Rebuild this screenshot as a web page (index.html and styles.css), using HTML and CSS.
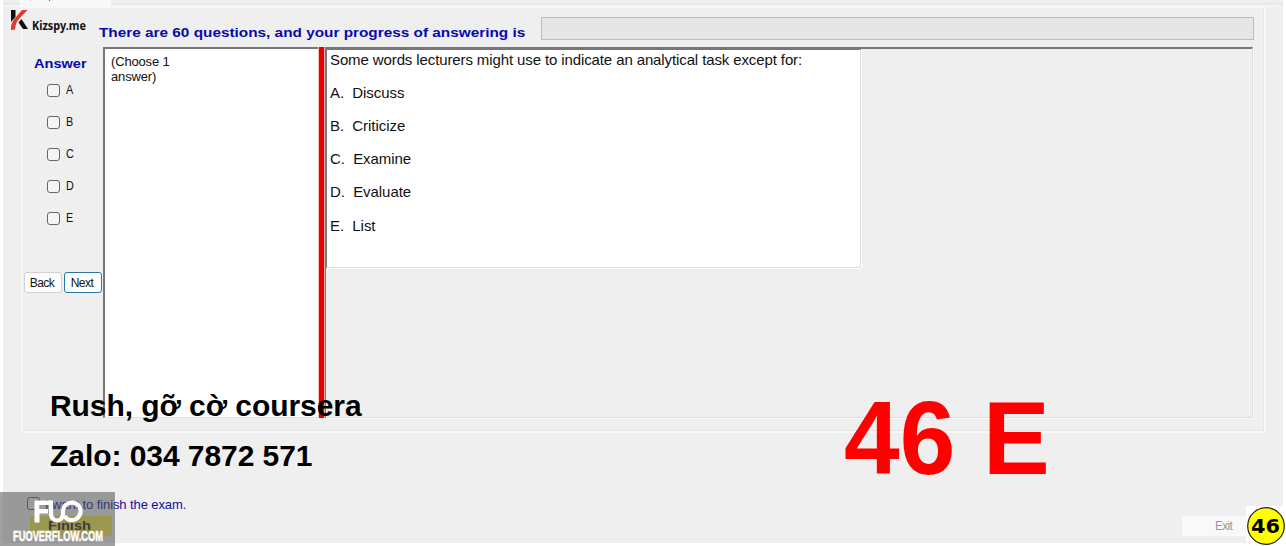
FILE: index.html
```
<!DOCTYPE html>
<html lang="en">
<head>
<meta charset="utf-8">
<title>Exam</title>
<link rel="stylesheet" href="styles.css">
</head>
<body>
<main class="window">
  <div class="tabs"><div class="tab"><span class="tab-tail"></span></div></div>
  <section class="group">
    <header class="top">
      <h1 class="progress-label"><span>There are 60 questions, and your progress of answering is</span></h1>
      <div class="progress"></div>
    </header>
    <div class="content">
      <aside class="answers">
        <h2><span>Answer</span></h2>
        <label class="choice"><i class="box"></i><span>A</span></label>
        <label class="choice"><i class="box"></i><span>B</span></label>
        <label class="choice"><i class="box"></i><span>C</span></label>
        <label class="choice"><i class="box"></i><span>D</span></label>
        <label class="choice"><i class="box"></i><span>E</span></label>
        <div class="nav"><button class="btn">Back</button><button class="btn focused">Next</button></div>
      </aside>
      <div class="hint">(Choose 1<br>answer)</div>
      <div class="splitter"></div>
      <div class="viewer">
        <article class="question">
          <p class="stem">Some words lecturers might use to indicate an analytical task except for:</p>
          <p>A.&nbsp; Discuss</p>
          <p>B.&nbsp; Criticize</p>
          <p>C.&nbsp; Examine</p>
          <p class="wide">D.&nbsp; Evaluate</p>
          <p>E.&nbsp; List</p>
        </article>
      </div>
    </div>
  </section>
  <footer class="footer">
    <div class="finish">
      <label class="confirm"><i class="box"></i><span>I want to finish the exam.</span></label>
      <div class="finish-btn"><span>Finish</span></div>
    </div>
    <div class="exit"><span>Exit</span></div>
  </footer>
</main>

<svg class="kizspy" width="92" height="28" viewBox="0 0 92 28">
  <path d="M2 1h4.500v7L2 13z" fill="#111"/>
  <path d="M13 1h5.500L9.500 10.500Q6.500 14 6 20.500L2 21v-3.500Q3 12 7 8z" fill="#e23a30"/>
  <path d="M9.500 13.500l3-3.500 6.500 10h-5z" fill="#111"/>
  <text x="23" y="21" textLength="54" lengthAdjust="spacingAndGlyphs">Kizspy.me</text>
</svg>
<div class="note note-a">Rush, gỡ cờ coursera</div>
<div class="note note-b">Zalo: 034 7872 571</div>
<div class="key">46 E</div>
<div class="badge"><svg width="40" height="40" viewBox="0 0 40 40">
  <circle cx="20" cy="20" r="18.300"/>
  <text x="5" y="27" textLength="29" lengthAdjust="spacingAndGlyphs">46</text>
</svg></div>
<div class="watermark"><svg width="115" height="54" viewBox="0 0 115 54">
  <path d="M34.500 8.500H51l-1.500 4.500H39.500v4h8.500v4.500h-8.500v9h-5z" fill="#fff"/>
  <g fill="none" stroke="#fff" stroke-width="4.200">
    <path d="M51 8.500v13a6 6.500 0 0 0 12 1V19a8.800 8.800 0 1 1 6 8.700q-3-1-4.500-3.500"/>
  </g>
  <text x="13" y="48.500" textLength="90" lengthAdjust="spacingAndGlyphs">FUOVERFLOW.COM</text>
</svg></div>
</body>
</html>
```
FILE: styles.css
```
* { box-sizing: border-box; }
body { margin: 0; width: 1286px; height: 546px; overflow: hidden; position: relative; background: #fff; font-family: "Liberation Sans", Arial, sans-serif; color: #111; }
h1, h2, p { margin: 0; }
.window { margin-left: 3px; width: 1280px; height: 543px; background: #efefef; display: flex; flex-direction: column; }
.tabs { height: 7px; padding-left: 17px; border-bottom: 1px solid #f8f8f8; box-shadow: inset 0 -2px #efefef, inset 0 -3px #e4e4e4; }
.tab { width: 91px; height: 7px; background: #f9f9f9; padding-left: 29px; }
.tab-tail { display: block; width: 1px; height: 1px; background: #666; }
.group { margin-left: 18px; width: 1245px; height: 426px; border: 2px solid #f8f8f8; border-top-width: 1px; box-shadow: inset -1px -1px #e6e6e6, inset 1px 0 #ececec; display: flex; flex-direction: column; }
.top { height: 39px; display: flex; padding: 9px 10px 0 76px; }
.progress-label { width: 442px; flex: none; padding-top: 7px; font-size: 13px; line-height: 17px; color: #0808b0; white-space: nowrap; }
.progress-label span, .answers h2 span, .finish-btn span { display: inline-block; transform-origin: 0 50%; }
.progress-label span { transform: scaleX(1.18); }
.progress { flex: none; width: 713px; height: 23px; border: 1px solid #bcbcbc; background: #e6e6e6; }
.content { display: flex; height: 371px; }
.answers { width: 80px; padding: 8px 0 0; }
.answers h2 { padding-left: 11px; height: 20px; font-size: 13px; line-height: 17px; color: #0808b0; margin-bottom: 8px; }
.answers h2 span { transform: scaleX(1.12); }
.choice { display: flex; height: 32px; padding-left: 24px; gap: 6px; font-size: 12px; line-height: 14px; }
.choice span { transform: scaleX(.9); transform-origin: 0 50%; }
.box { flex: none; width: 13px; height: 13px; margin-top: 1px; border: 1px solid #666; border-radius: 3px; background: #f4f4f4; }
.nav { display: flex; gap: 2px; margin-top: 29px; padding-left: 1px; }
.btn { width: 38px; height: 21px; padding: 0 2px 0 0; border: 1px solid #d2d2d2; border-radius: 3px; background: #fdfdfd; color: #111; font: 12px/18px "Liberation Sans", Arial, sans-serif; letter-spacing: -.5px; }
.focused { border-color: #2878a8; }
.hint { width: 215px; padding: 5px 0 0 6px; border-left: 2px solid #777; border-top: 2px solid #777; border-bottom: 1px solid #e2e2e2; background: #fff; font-size: 13px; line-height: 15px; letter-spacing: -.16px; }
.splitter { width: 7px; background: #e60000; border-left: 1px solid #f8c0c0; border-right: 1px solid #efb0b0; }
.viewer { width: 928px; border-top: 2px solid #777; border-left: 1px solid #777; border-right: 1px solid #ddd; border-bottom: 1px solid #ddd; box-shadow: 1px 1px #fafafa; }
.question { width: 535px; height: 219px; padding: 1px 0 0 3px; background: #fff; border-left: 1px solid #777; border-top: 1px solid #777; border-right: 1px solid #ddd; border-bottom: 1px solid #ddd; box-shadow: 1px 1px #fff; font-size: 15px; line-height: 17px; letter-spacing: -.05px; }
.question p { margin-bottom: 16px; white-space: nowrap; }
.question .wide { margin-bottom: 17px; }
.question .stem { letter-spacing: -.112px; }
.footer { flex: 1; display: flex; justify-content: space-between; }
.finish { padding: 63px 0 0 24px; }
.confirm { display: flex; gap: 5px; height: 20px; font-size: 13px; line-height: 17px; letter-spacing: -.1px; color: #1010a0; white-space: nowrap; }
.finish-btn { margin: 0 0 0 3px; width: 82px; height: 20px; background: #f4ec50; color: #222; font: bold 13px/20px "Liberation Sans", Arial, sans-serif; padding-left: 18px; }
.finish-btn span { transform: scaleX(1.12); }
.exit { align-self: flex-end; width: 80px; height: 20px; margin: 0 21px 7px 0; background: #f9f9f9; color: #999; font-size: 12px; line-height: 20px; padding-left: 33px; letter-spacing: -.7px; }
.kizspy { position: absolute; left: 9px; top: 9px; }
.kizspy text { font: bold 12px "Noto Sans", sans-serif; fill: #111; }
.note { position: absolute; left: 50px; color: #000; font-weight: bold; font-size: 30px; line-height: 34px; letter-spacing: -.06px; white-space: nowrap; }
.note-a { top: 389px; }
.note-b { top: 439px; }
.key { position: absolute; left: 844px; top: 380px; color: #f00; font-weight: bold; font-size: 104px; line-height: 116px; white-space: nowrap; transform: scaleX(.962); transform-origin: 0 50%; }
.badge { position: absolute; left: 1246px; top: 506px; width: 40px; height: 40px; background: #fff; }
.badge svg, .watermark svg { display: block; }
.badge circle { fill: #ff0; stroke: #222; stroke-width: 1.2px; }
.badge text { font: bold 19px "DejaVu Sans", sans-serif; fill: #000; }
.watermark { position: absolute; left: 0; top: 492px; width: 115px; height: 54px; background: rgba(82, 82, 82, .55); }
.watermark text { font: bold 15px "Liberation Sans", sans-serif; fill: #fff; stroke: #fff; stroke-width: .5px; }
```
